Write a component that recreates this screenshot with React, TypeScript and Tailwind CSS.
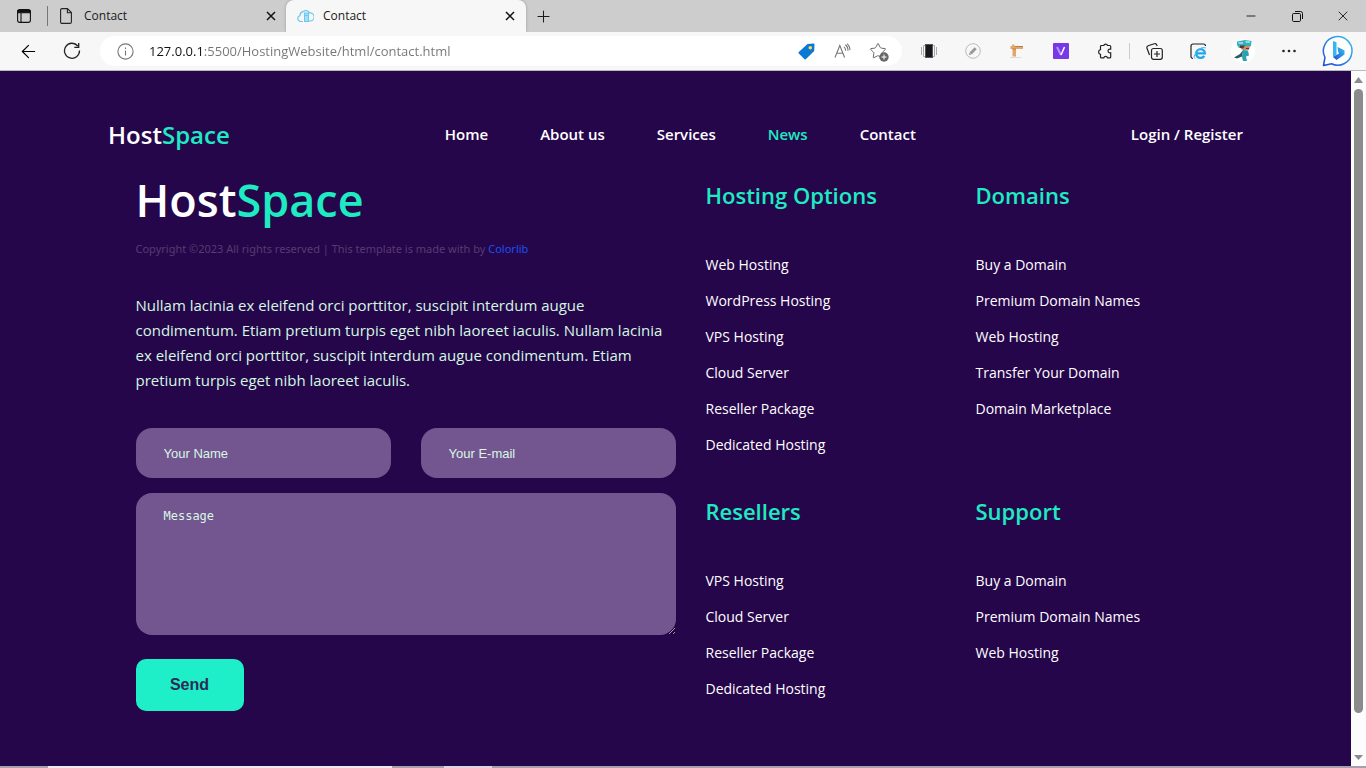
import React from "react";
import { ArrowLeft, Plus, Star, X, Minus } from "lucide-react";

const NAV = ["Home", "About us", "Services", "News", "Contact"];

const GROUPS = [
  {
    title: "Hosting Options",
    links: ["Web Hosting", "WordPress Hosting", "VPS Hosting", "Cloud Server", "Reseller Package", "Dedicated Hosting"],
  },
  {
    title: "Domains",
    links: ["Buy a Domain", "Premium Domain Names", "Web Hosting", "Transfer Your Domain", "Domain Marketplace"],
  },
  { title: "Resellers", links: ["VPS Hosting", "Cloud Server", "Reseller Package", "Dedicated Hosting"] },
  { title: "Support", links: ["Buy a Domain", "Premium Domain Names", "Web Hosting"] },
];

type IconButtonProps = { label: string; className?: string; children: React.ReactNode };

function IconButton({ label, className = "w-6", children }: IconButtonProps) {
  return (
    <button type="button" aria-label={label} className={`flex h-8 shrink-0 items-center justify-center ${className}`}>
      {children}
    </button>
  );
}

function CloseIcon() {
  return (
    <svg width="10" height="10" viewBox="0 0 10 10" stroke="#111" strokeWidth="1.5">
      <path d="M1 1l8 8M9 1L1 9" />
    </svg>
  );
}

function CloudIcon() {
  return (
    <svg width="17" height="14" viewBox="0 0 17 14" fill="none" stroke="#6cc8ee">
      <path d="M6 12.5H3.6A3 3 0 0 1 3 6.6 4 4 0 0 1 6 2.6 4.2 4.2 0 0 1 12.6 4 3.9 3.9 0 0 1 13.6 12H12" strokeWidth="1.2" />
      <rect x="7.500" y="4" width="4" height="8.500" fill="#a5def6" strokeWidth="1" />
      <path d="M8 6.500h3" strokeWidth="1" />
    </svg>
  );
}

function TabStrip() {
  return (
    <div className="flex h-8 shrink-0 items-stretch bg-[#cdcdcd] text-xs text-[#1b1b1b]">
      <div className="flex w-[47px] items-center justify-center">
        <button type="button" aria-label="Tab actions">
          <svg width="14" height="14" viewBox="0 0 14 14" fill="none" stroke="#111" strokeWidth="1.1">
            <rect x=".6" y=".6" width="12.8" height="12.8" rx="2.2" />
            <path d="M1 1.5h12v2.2H1z" fill="#111" />
            <path d="M4 4v9.4" />
          </svg>
        </button>
      </div>
      <div className="flex w-[239px] items-center">
        <div className="h-5 w-px bg-[#777]" />
        <div className="flex flex-1 items-center pr-[10px] pl-3">
          <svg width="12" height="16" viewBox="0 0 12 16" fill="none" stroke="#222" strokeWidth="1.1">
            <path d="M2 .6h5.4l4 4V14a1.4 1.4 0 0 1-1.4 1.4H2A1.4 1.4 0 0 1 .6 14V2A1.4 1.4 0 0 1 2 .6zM7.4.8v4h4" />
          </svg>
          <span className="ml-3 flex-1">Contact</span>
          <button type="button" aria-label="Close tab"><CloseIcon /></button>
        </div>
      </div>
      <div className="flex w-60 items-center rounded-t-lg bg-[#f7f7f7] pr-[11px] pl-[11px] shadow-[0_0_3px_#999]">
        <CloudIcon />
        <span className="ml-[9px] flex-1">Contact</span>
        <button type="button" aria-label="Close tab"><CloseIcon /></button>
      </div>
      <IconButton label="New tab" className="w-[34px]">
        <Plus size={19} strokeWidth={1.3} />
      </IconButton>
      <div className="flex-1" />
      <IconButton label="Minimize" className="w-[46px]">
        <Minus size={14} strokeWidth={1.6} />
      </IconButton>
      <IconButton label="Restore" className="w-[46px]">
        <svg width="11" height="11" viewBox="0 0 11 11" fill="none" stroke="#111">
          <rect x=".5" y="2.5" width="8" height="8" rx="1.2" />
          <path d="M3 .5h5.500a2 2 0 0 1 2 2V8" />
        </svg>
      </IconButton>
      <IconButton label="Close window" className="w-[46px]">
        <X size={16} strokeWidth={1.4} />
      </IconButton>
    </div>
  );
}

function Toolbar() {
  return (
    <div className="flex h-[39px] shrink-0 items-center border-b border-[#b9b9b9] bg-[#f7f7f7] pr-3 pl-4">
      <IconButton label="Back">
        <ArrowLeft size={21} strokeWidth={1.3} />
      </IconButton>
      <IconButton label="Reload" className="ml-5 w-6">
        <svg width="18" height="18" viewBox="0 0 18 18" fill="none" stroke="#222" strokeWidth="1.3">
          <path d="M14.800 4A7.500 7.500 0 1 0 16.500 8.600M15.700 1v4.400h-4.400" />
        </svg>
      </IconButton>
      <div className="ml-4 flex h-[30px] min-w-0 flex-1 items-center rounded-full bg-white pr-3 pl-[17px]">
        <svg width="17" height="17" viewBox="0 0 17 17" fill="none" stroke="#767676" strokeWidth="1.1">
          <circle cx="8.500" cy="8.500" r="7.600" />
          <path d="M8.500 7.500v5M8.500 4.500v1.500" />
        </svg>
        <input
          type="text"
          aria-label="Address"
          defaultValue="127.0.0.1:5500/HostingWebsite/html/contact.html"
          className="ml-[15px] h-6 min-w-0 flex-1 bg-[linear-gradient(90deg,#111111_54px,#757575_54px)] bg-clip-text text-[13px] leading-6 text-transparent outline-none"
        />
        <IconButton label="Shopping">
          <svg width="17" height="17" viewBox="0 0 17 17">
            <path d="M9.500 1 15.500 .5a1 1 0 0 1 1 1L16.200 8 8 16a1.200 1.200 0 0 1-1.700 0L.8 10.600a1.200 1.200 0 0 1 0-1.700z" fill="#0b78d4" />
            <circle cx="12.300" cy="4.700" r="1.800" fill="#ffd65a" />
          </svg>
        </IconButton>
        <IconButton label="Read aloud" className="ml-3 w-6">
          <svg width="17" height="16" viewBox="0 0 17 16" fill="none" stroke="#777" strokeWidth="1.100">
            <path d="M1 14.500 5.800 2.500 10.600 14.500M2.700 10.300h6.200M10 3.800q1.800 1.500 1.600 4M11.300 1.800q3 2.300 2.600 6M13 .6q3.300 3 2.800 6.600" />
          </svg>
        </IconButton>
        <IconButton label="Add to favorites" className="ml-3 w-6">
          <span className="relative flex">
            <Star size={18} strokeWidth={1.300} color="#666" />
            <svg className="absolute -right-0.5 -bottom-0.5" width="10" height="10" viewBox="0 0 10 10">
              <circle cx="5" cy="5" r="4.700" fill="#666" />
              <path d="M5 2.500v5M2.500 5h5" stroke="#fff" />
            </svg>
          </span>
        </IconButton>
      </div>
      <div className="ml-[15px] flex shrink-0 items-center">
        <IconButton label="Device extension">
          <svg width="16" height="16" viewBox="0 0 16 16" fill="none" stroke="#aaa">
            <path d="M4 2.500H2.500v11H4M12 2.500h1.500v11H12M.5 4v8M15.500 4v8" />
            <rect x="4.500" y="1.500" width="7" height="13" fill="#15191d" stroke="#555" />
          </svg>
        </IconButton>
        <IconButton label="Pencil extension" className="ml-5 w-6">
          <svg width="16" height="16" viewBox="0 0 16 16" fill="none">
            <circle cx="8" cy="8" r="7.300" stroke="#bbb" />
            <path d="M5.500 10.500 10.700 5.300" stroke="#999" strokeWidth="3" />
            <path d="m3.900 12.100.6-2.400 1.800 1.800z" fill="#999" />
          </svg>
        </IconButton>
        <IconButton label="Ruler extension" className="ml-5 w-6">
          <svg width="16" height="16" viewBox="0 0 16 16">
            <path d="M3 1.500h2.500V3H14v3H7v7.500H3.500V6H1.500V3H3z" fill="#e3a66b" />
            <path d="M6 3.500h8M3.500 6H7" stroke="#bd7a43" />
            <path d="M1 14.500h11" stroke="#ddd" />
          </svg>
        </IconButton>
        <IconButton label="V extension" className="ml-5 w-6">
          <svg width="16" height="16" viewBox="0 0 16 16" fill="none">
            <rect width="16" height="16" rx="1" fill="#7738e8" />
            <path d="m4 4 4 8" stroke="#b795f6" strokeWidth="2" />
            <path d="m8 12 3.500-8" stroke="#fff" strokeWidth="1.500" />
          </svg>
        </IconButton>
        <IconButton label="Extensions" className="ml-5 w-6">
          <svg width="16" height="17" viewBox="0 0 16 17" fill="none" stroke="#222" strokeWidth="1.200">
            <path d="M4.500 2.500h2.300a1.900 1.900 0 0 1 3.700 0h2.200a1 1 0 0 1 1 1v2.600h-.8a1.900 1.900 0 0 0 0 3.800h.8v4a1 1 0 0 1-1 1H10.500a1.900 1.900 0 0 0-3.700 0H4.500a1 1 0 0 1-1-1v-2.600a2.400 2.400 0 0 1 0-4.700V3.500a1 1 0 0 1 1-1z" />
          </svg>
        </IconButton>
        <div className="mx-3 h-4 w-px bg-[#ccc]" />
        <IconButton label="Collections">
          <svg width="17" height="17" viewBox="0 0 17 17" fill="none" stroke="#222" strokeWidth="1.200">
            <rect x="5.500" y="5.500" width="10.800" height="10.800" rx="2" />
            <path d="M11 8v6M8 11h6M3.500 12 1 5.300a2 2 0 0 1 1.100-2.500L8.300.8a2 2 0 0 1 2.500 1.200L11.200 3" />
          </svg>
        </IconButton>
        <IconButton label="Internet Explorer mode" className="ml-5 w-6">
          <svg width="17" height="17" viewBox="0 0 17 17" fill="none">
            <path d="M3 15.500A2 2 0 0 1 1 13.500V3a2 2 0 0 1 2-2h10.500a2 2 0 0 1 2 2" stroke="#222" strokeWidth="1.200" />
            <path d="M5.700 10.300h9.200a4.400 4.400 0 1 0-.6 2.500" stroke="#20a8ed" strokeWidth="2.300" />
            <path d="M5 15.500Q2.500 14 7 8.500T15.800 5" stroke="#45b9f0" />
          </svg>
        </IconButton>
        <IconButton label="Profile" className="ml-[21px] w-6">
          <svg width="24" height="24" viewBox="0 0 24 24">
            <circle cx="12" cy="12" r="12" fill="#fff" />
            <path d="M6 2.500 14 1l6.500 1-.5 5-4 2H8L6 6z" fill="#35aebd" />
            <path d="M7 3h5v2H8zM14 2h5v2h-4z" fill="#8cdbe1" />
            <path d="M11 7h8l-1 4h-6l-2-1z" fill="#c88f6d" />
            <path d="M9 6.500h5l-2 3-3-.5zM15 9h3v1h-3z" fill="#5b3828" />
            <path d="m12 11 5 .5 1 5-3 1 1 4.500h-4l-1-4z" fill="#27a3b3" />
            <path d="m12 11-3 4-6 3.500 3 1 5-2z" fill="#285e59" />
          </svg>
        </IconButton>
        <IconButton label="Settings and more" className="ml-[22px] w-6">
          <svg width="14" height="4" viewBox="0 0 14 4" fill="#222">
            <circle cx="1.500" cy="2" r="1.300" />
            <circle cx="7" cy="2" r="1.300" />
            <circle cx="12.500" cy="2" r="1.300" />
          </svg>
        </IconButton>
        <IconButton label="Bing chat" className="ml-[21px] w-8">
          <svg width="32" height="32" viewBox="0 0 32 32">
            <defs>
              <linearGradient id="bing" x1="0" y1="1" x2="1" y2="0">
                <stop stopColor="#2149d8" />
                <stop offset="1" stopColor="#39c4ef" />
              </linearGradient>
            </defs>
            <path d="M1.500 30.500 3 22.500A14.300 14.300 0 1 1 9.500 28.800z" fill="#fff" stroke="url(#bing)" strokeWidth="1.500" strokeLinejoin="round" />
            <path d="m11 6 3.500 1.300V20L11 22z" fill="#38b7ef" />
            <path d="m15.500 12 7 3.200v4.300L14.500 25 11 22l6-3.500-1-2.500z" fill="url(#bing)" />
          </svg>
        </IconButton>
      </div>
    </div>
  );
}

function Scrollbar() {
  return (
    <div className="flex w-[15px] shrink-0 flex-col items-center bg-[#fcfcfc] py-[6px]">
      <svg width="9" height="6" viewBox="0 0 9 6" fill="#8b8b8b"><path d="M4.500 0 9 6H0z" /></svg>
      <div className="mt-[6px] w-[9px] flex-1 rounded-full bg-[#8b8b8b]" />
      <svg className="mt-[42px]" width="9" height="5" viewBox="0 0 9 5" fill="#8b8b8b"><path d="M0 0h9L4.500 5z" /></svg>
    </div>
  );
}

function Brand() {
  return (
    <>
      Host<span className="text-[#1eebc2]">Space</span>
    </>
  );
}

function LinkGroup({ title, links }: { title: string; links: string[] }) {
  return (
    <section>
      <h3 className="text-[22px] leading-8 font-semibold whitespace-nowrap text-[#1eebc2]">{title}</h3>
      <ul className="mt-9">
        {links.map((link) => (
          <li key={link} className="text-sm leading-9 text-white">
            <a href="#">{link}</a>
          </li>
        ))}
      </ul>
    </section>
  );
}

const FIELD = "rounded-2xl bg-[#735690] px-7 text-[#d9f7e4] outline-none placeholder:text-[#d9f7e4] placeholder:opacity-100";

function ContactForm() {
  return (
    <form className="mt-[35px]" onSubmit={(e) => e.preventDefault()}>
      <div className="grid grid-cols-2 gap-[30px]">
        <input type="text" aria-label="Your Name" placeholder="Your Name" className={`block h-[50px] w-full font-['Liberation_Sans',sans-serif] text-[13px] ${FIELD}`} />
        <input type="email" aria-label="Your E-mail" placeholder="Your E-mail" className={`block h-[50px] w-full font-['Liberation_Sans',sans-serif] text-[13px] ${FIELD}`} />
      </div>
      <textarea aria-label="Message" placeholder="Message" className={`mt-[15px] block h-[142px] w-full resize py-[15px] font-['DejaVu_Sans_Mono',monospace] text-xs leading-4 ${FIELD}`} />
      <button type="submit" className="mt-6 h-[52px] w-[108px] rounded-[10px] bg-[#1eefc8] font-['Liberation_Sans',sans-serif] text-base font-bold text-[#2b2b55]">
        Send
      </button>
    </form>
  );
}

function Site() {
  return (
    <div className="min-w-0 flex-1 overflow-hidden bg-[#26064b]">
      <header className="flex items-start justify-between px-[8%] pt-[46px] text-white">
        <a href="#" className="text-2xl leading-9 font-semibold"><Brand /></a>
        <nav className="flex gap-[52px] text-[15px] leading-[34px] font-semibold">
          {NAV.map((item) => (
            <a key={item} href="#" className={item === "News" ? "text-[#1eebc2]" : ""}>{item}</a>
          ))}
        </nav>
        <a href="#" className="text-[15px] leading-[34px] font-semibold">Login / Register</a>
      </header>
      <main className="mx-auto grid max-w-[1080px] grid-cols-[9fr_4fr_4fr] gap-x-[30px] pt-[26px]">
        <div>
          <h1 className="text-[45px] leading-[42px] font-semibold text-white"><Brand /></h1>
          <p className="mt-[19px] font-['Noto_Sans',sans-serif] text-[11px] leading-[18px] text-[#563b70]">
            Copyright ©2023 All rights reserved | This template is made with by{" "}
            <a href="#" className="text-[#1652f0]">Colorlib</a>
          </p>
          <p className="mt-[35px] text-[15px] leading-[25px] text-[#d3f8e1]">
            Nullam lacinia ex eleifend orci porttitor, suscipit interdum augue condimentum. Etiam pretium turpis eget
            nibh laoreet iaculis. Nullam lacinia ex eleifend orci porttitor, suscipit interdum augue condimentum. Etiam
            pretium turpis eget nibh laoreet iaculis.
          </p>
          <ContactForm />
        </div>
        <div className="col-span-2 grid grid-cols-2 content-start gap-x-[30px] gap-y-8">
          {GROUPS.map((group) => (
            <LinkGroup key={group.title} {...group} />
          ))}
        </div>
      </main>
    </div>
  );
}

export default function App() {
  return (
    <div className="flex h-screen flex-col overflow-hidden font-['Open_Sans',sans-serif]">
      <TabStrip />
      <Toolbar />
      <div className="flex min-h-0 flex-1">
        <Site />
        <Scrollbar />
      </div>
      <div className="flex h-[2px] shrink-0 bg-[#a79fae]">
        <div className="ml-[48px] w-[344px] bg-[#eeeaf0]" />
        <div className="ml-[52px] w-12 bg-[#ddd5e2]" />
      </div>
    </div>
  );
}
